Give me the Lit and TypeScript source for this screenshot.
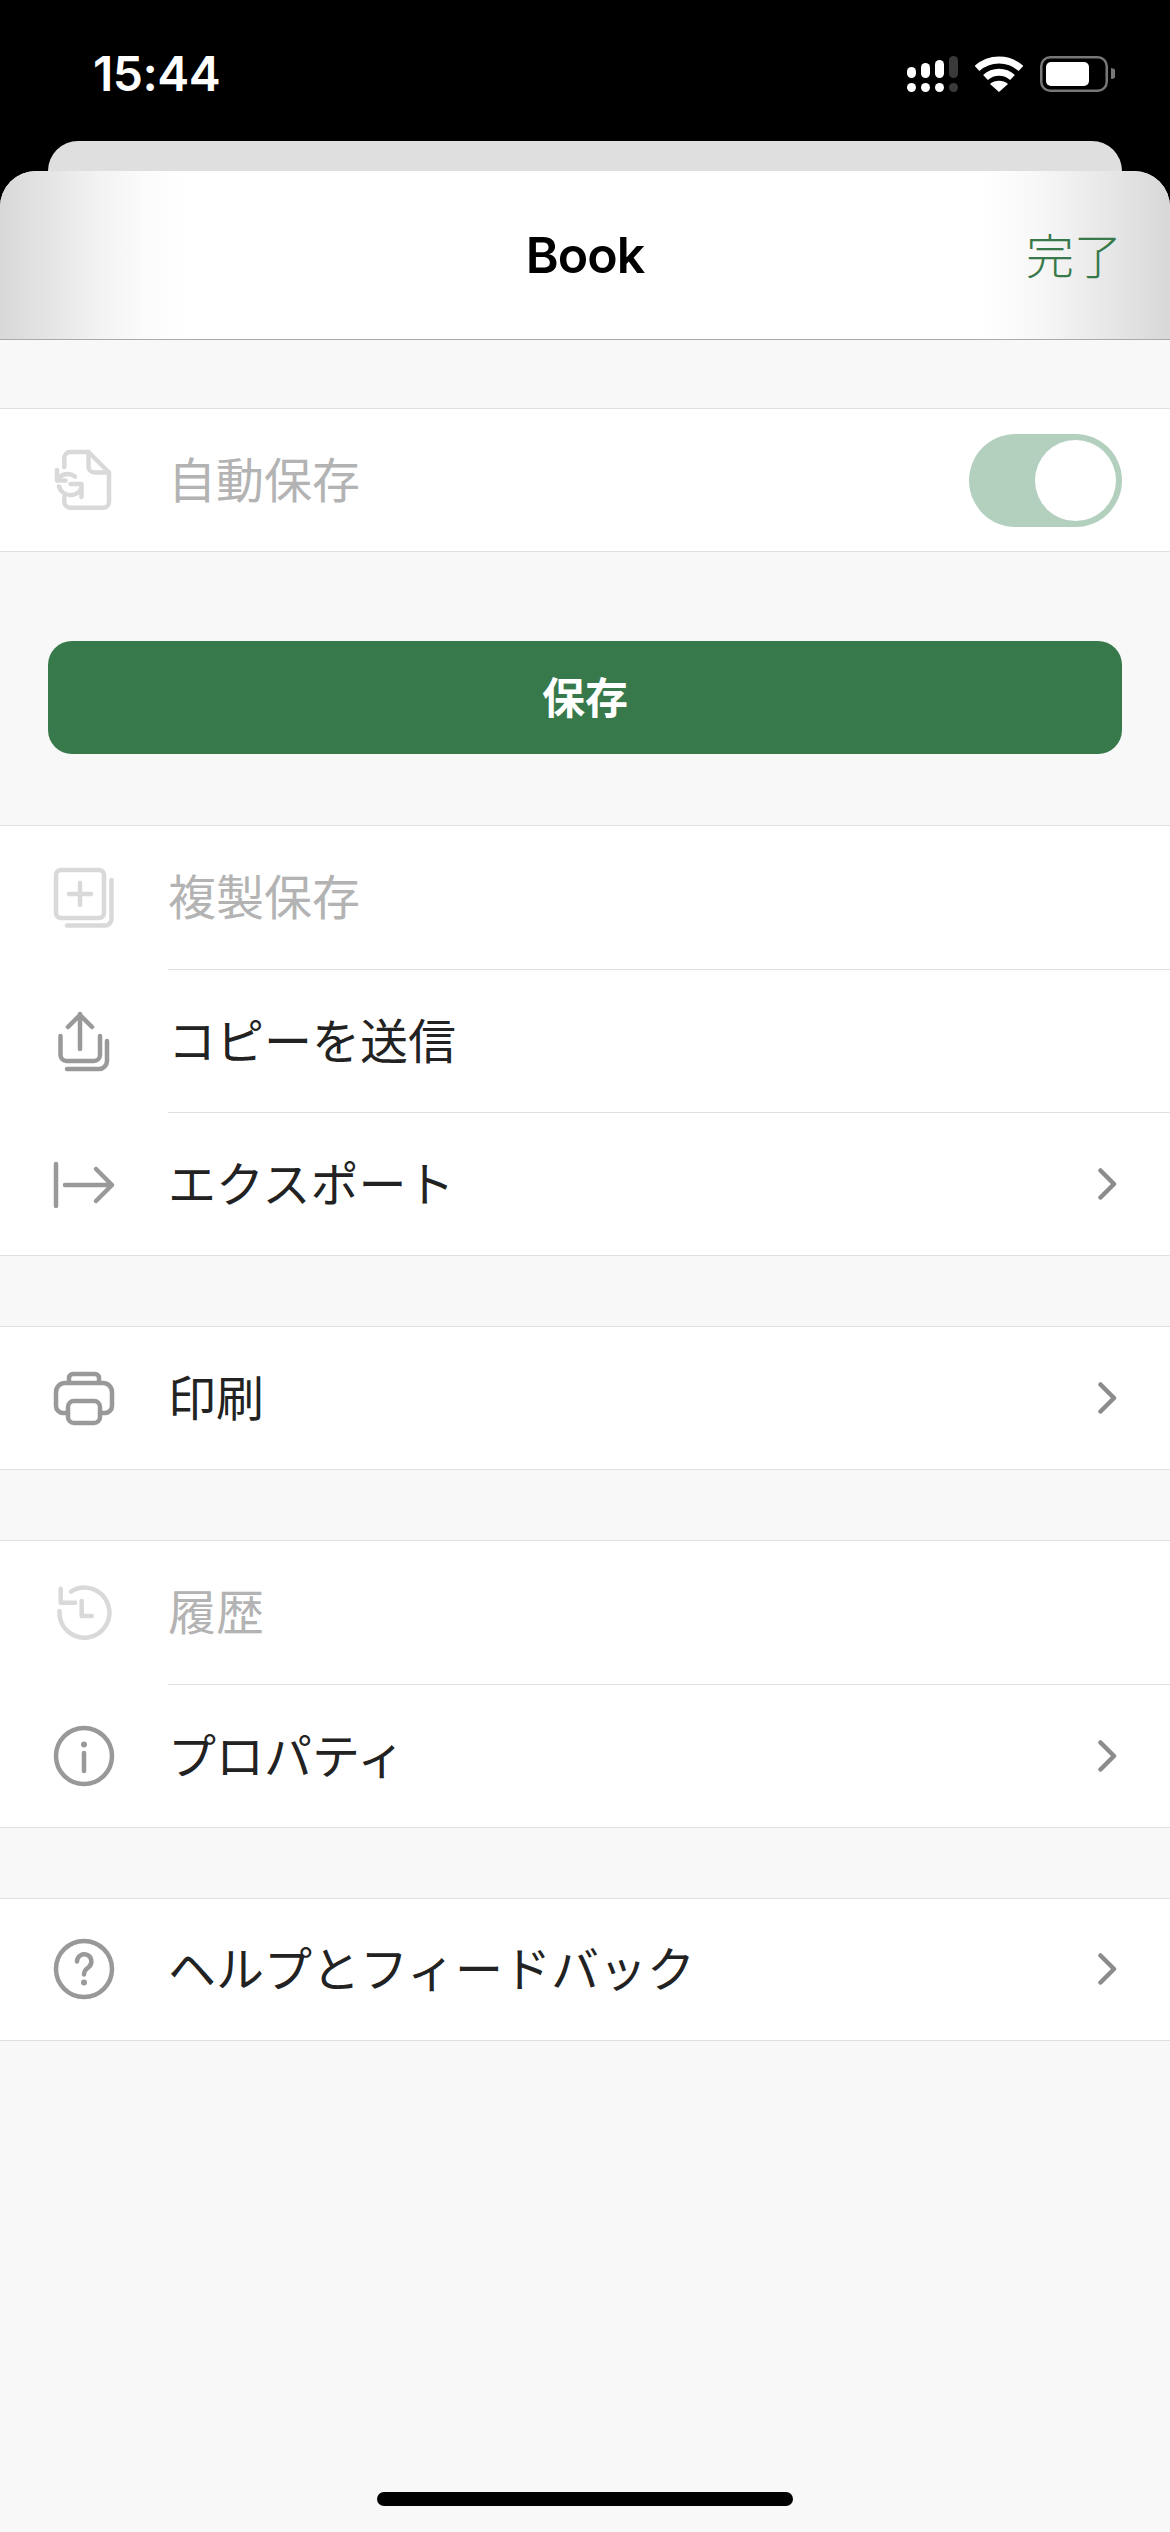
import { LitElement, css, html, svg, nothing } from 'lit';
import { customElement } from 'lit/decorators.js';
import { classMap } from 'lit/directives/class-map.js';

type Item = { label: string; icon: keyof typeof ICONS; dim?: boolean; chevron?: boolean };

const ICONS = {
  autosave: svg`
    <path d="M10.300 17V8a6 6 0 0 1 6-6H34.500L55 22.500V52a5.700 5.700 0 0 1-5.700 5.700H16.300a6 6 0 0 1-6-6V47" />
    <path d="M34.500 2v14.500a6 6 0 0 0 6 6H55" />
    <path d="M3 20v10.500h8.500M3 30.500A12 12 0 0 1 21 26.500" />
    <path d="M27.500 47V34H16.500M27.500 38A12 12 0 0 1 5 36.500" />`,
  duplicate: svg`
    <rect x="2" y="2" width="48" height="48" rx="5" />
    <path d="M57.500 12v39a6.500 6.500 0 0 1-6.500 6.500h-38" />
    <path d="M26 15v22M15 26h22" />`,
  share: svg`
    <path d="M26 38V3M14 16 26 4l12 12" />
    <path d="M6.500 25v19a6 6 0 0 0 6 6H40a6 6 0 0 0 6-6V25" />
    <path d="M53 30v20a8 8 0 0 1-8 8H13" />`,
  export: svg`
    <path d="M2 10v42M11 31h47M42 15l16 16-16 16" />`,
  print: svg`
    <path d="M15 14v-4a4 4 0 0 1 4-4h22a4 4 0 0 1 4 4v4" />
    <path d="M14 45H9a7 7 0 0 1-7-7V24a9 9 0 0 1 9-9h38a9 9 0 0 1 9 9v14a7 7 0 0 1-7 7h-5" />
    <rect x="14" y="33" width="32" height="22" rx="6" />`,
  history: svg`
    <path d="M5.500 28A25 25 0 1 0 17 8.600" />
    <path d="M6.700 5.700v14H21M27.700 18v15h10" />`,
  info: svg`
    <circle cx="30" cy="30" r="28" />
    <path d="M30 27v18" />
    <circle cx="30" cy="18.500" r="3" class="solid" />`,
  help: svg`
    <circle cx="30" cy="30" r="28" />
    <path d="M23 22.500a7.200 7.200 0 1 1 11.500 5.800c-3 2.200-4.500 3.700-4.500 7.200" />
    <circle cx="30" cy="43.500" r="3" class="solid" />`,
};

const GROUPS: Item[][] = [
  [
    { label: '複製保存', icon: 'duplicate', dim: true },
    { label: 'コピーを送信', icon: 'share' },
    { label: 'エクスポート', icon: 'export', chevron: true },
  ],
  [{ label: '印刷', icon: 'print', chevron: true }],
  [
    { label: '履歴', icon: 'history', dim: true },
    { label: 'プロパティ', icon: 'info', chevron: true },
  ],
  [{ label: 'ヘルプとフィードバック', icon: 'help', chevron: true }],
];

@customElement('app-root')
export class AppRoot extends LitElement {
  static styles = css`
    :host {
      display: flex;
      flex-direction: column;
      width: 1170px;
      height: 2532px;
      background: #000;
      font-family: 'Noto Sans CJK JP', 'Noto Sans', sans-serif;
      color: #222;
    }
    .status {
      height: 141px;
      flex: none;
      display: flex;
      justify-content: space-between;
      padding: 54px 0 0 93px;
      box-sizing: border-box;
    }
    .time {
      font: 600 48px/40px Inter, sans-serif;
      color: #fff;
      letter-spacing: -0.5px;
    }
    .status-icons {
      display: flex;
      align-items: flex-start;
      padding: 2px 55px 0 0;
      gap: 17px;
    }
    .back-sheet {
      flex: none;
      height: 30px;
      margin: 0 48px;
      background: #dfdfdf;
      border-radius: 32px 32px 0 0;
    }
    .sheet {
      flex: 1;
      display: flex;
      flex-direction: column;
      background: #f8f8f8;
      border-radius: 36px 36px 0 0;
      overflow: hidden;
    }
    .header {
      flex: none;
      height: 168px;
      display: grid;
      grid-template-columns: 1fr auto 1fr;
      align-items: center;
      padding: 0 48px;
      border-bottom: 1px solid #aaa;
      background: linear-gradient(
        90deg,
        #d8d8d8 0,
        #e5e5e5 50px,
        #f3f3f3 100px,
        #fbfbfb 145px,
        #fff 185px,
        #fff 980px,
        #f8f8f8 1035px,
        #e9e9e9 1100px,
        #d8d8d8 1170px
      );
    }
    .title {
      grid-column: 2;
      font: 600 50px/60px Inter, sans-serif;
      color: #000;
      letter-spacing: -1px;
    }
    .done {
      justify-self: end;
      font-size: 48px;
      font-weight: 300;
      line-height: 60px;
      padding-bottom: 5px;
      color: #37794a;
    }
    .group {
      background: #fff;
      border-top: 1px solid #e0e0e0;
      border-bottom: 1px solid #e0e0e0;
    }
    .group + .group {
      margin-top: 70px;
    }
    .group:last-of-type .row {
      height: 141px;
    }
    .first {
      margin-top: 68px;
    }
    .row {
      height: 142px;
      display: flex;
      align-items: center;
      padding-left: 54px;
      gap: 54px;
    }
    .row:not(:last-child) {
      height: 143.5px;
    }
    .row:not(:last-child) .body {
      border-bottom: 1px solid #e0e0e0;
    }
    .icon {
      flex: none;
      width: 60px;
      height: 60px;
      fill: none;
      stroke: #999;
      stroke-width: 4.5;
      stroke-linecap: round;
      stroke-linejoin: round;
      overflow: visible;
    }
    .icon .solid {
      fill: #999;
      stroke: none;
    }
    .dim .icon {
      stroke: #d9d9d9;
    }
    .dim .icon .solid {
      fill: #d9d9d9;
    }
    .body {
      flex: 1;
      align-self: stretch;
      display: flex;
      align-items: center;
      justify-content: space-between;
      padding-right: 48px;
    }
    .label {
      font-size: 48px;
      padding-bottom: 6px;
    }
    .dim .label {
      color: #b3b3b3;
    }
    .chevron {
      width: 24px;
      height: 36px;
      fill: none;
      stroke: #8c8c8c;
      stroke-width: 4.5;
      stroke-linecap: round;
      stroke-linejoin: round;
    }
    .toggle {
      box-sizing: border-box;
      width: 153px;
      height: 93px;
      padding: 6px;
      display: flex;
      justify-content: flex-end;
      border-radius: 47px;
      background: #b3d0bf;
    }
    .knob {
      width: 81px;
      height: 81px;
      border-radius: 50%;
      background: #fff;
    }
    .save {
      flex: none;
      margin: 89px 48px 71px;
      height: 113px;
      display: flex;
      align-items: center;
      justify-content: center;
      border-radius: 24px;
      background: #37794a;
      color: #fff;
      font-size: 43px;
      font-weight: 700;
      padding-bottom: 5px;
      box-sizing: border-box;
    }
    .fill {
      flex: 1;
    }
    .home {
      flex: none;
      align-self: center;
      width: 416px;
      height: 14px;
      margin-bottom: 26px;
      border-radius: 7px;
      background: #000;
    }
  `;

  private renderStatusIcons() {
    const cols = [
      { x: 0, top: 11, fill: '#fff' },
      { x: 14, top: 7, fill: '#fff' },
      { x: 28, top: 4, fill: '#fff' },
      { x: 42, top: 0, fill: '#3a3a3a' },
    ];
    return html`
      <svg width="51" height="36" viewBox="0 0 51 36">
        ${cols.map(
          (c) => svg`
            <rect x=${c.x} y=${c.top} width="9" height=${22 - c.top} rx="4.500" fill=${c.fill} />
            <rect x=${c.x} y="27" width="9" height="9" rx="4.500" fill=${c.fill} />`,
        )}
      </svg>
      <svg width="48" height="36" viewBox="0 0 48 36">
        <g fill="none" stroke="#fff" stroke-width="7">
          <path d="M2 12.500a33 33 0 0 1 44 0" />
          <path d="M10.500 21.500a20 20 0 0 1 27 0" />
        </g>
        <path d="M15 28a14 14 0 0 1 18 0L24 36z" fill="#fff" />
      </svg>
      <svg width="75" height="36" viewBox="0 0 75 36">
        <rect x="1.250" y="1.250" width="65.500" height="33.500" rx="9" fill="none" stroke="#777" stroke-width="2.500" />
        <rect x="6" y="6" width="43" height="24" rx="5" fill="#fff" />
        <path d="M71 12a5.500 5.500 0 0 1 0 11z" fill="#777" />
      </svg>
    `;
  }

  private renderRow(item: Item) {
    return html`
      <div class=${classMap({ row: true, dim: !!item.dim })}>
        <svg class="icon" viewBox="0 0 60 60">${ICONS[item.icon]}</svg>
        <div class="body">
          <span class="label">${item.label}</span>
          ${item.chevron
            ? html`<svg class="chevron" viewBox="0 0 24 36"><path d="M2.500 4.500 16 18 2.500 31.500" /></svg>`
            : nothing}
        </div>
      </div>
    `;
  }

  render() {
    return html`
      <div class="status">
        <span class="time">15:44</span>
        <div class="status-icons">${this.renderStatusIcons()}</div>
      </div>
      <div class="back-sheet"></div>
      <div class="sheet">
        <header class="header">
          <span class="title">Book</span>
          <span class="done">完了</span>
        </header>

        <section class="group first">
          <div class="row dim">
            <svg class="icon" viewBox="0 0 60 60">${ICONS.autosave}</svg>
            <div class="body">
              <span class="label">自動保存</span>
              <div class="toggle"><div class="knob"></div></div>
            </div>
          </div>
        </section>

        <div class="save">保存</div>

        ${GROUPS.map(
          (items) => html`<section class="group">${items.map((item) => this.renderRow(item))}</section>`,
        )}

        <div class="fill"></div>
        <div class="home"></div>
      </div>
    `;
  }
}
